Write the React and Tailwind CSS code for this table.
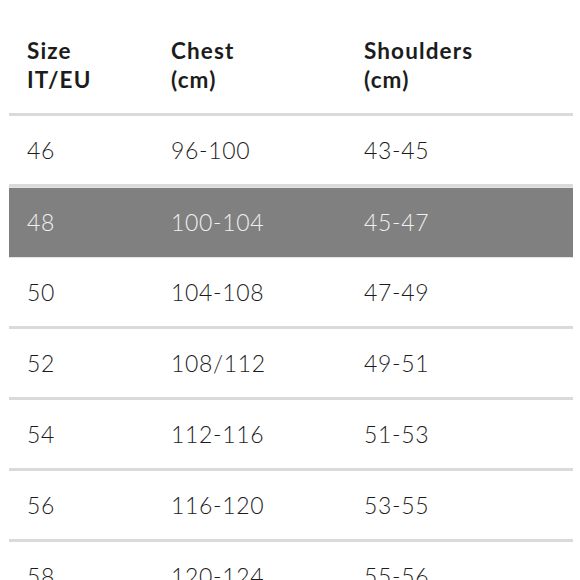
const rows = [
  ["46", "96-100", "43-45"],
  ["48", "100-104", "45-47"],
  ["50", "104-108", "47-49"],
  ["52", "108/112", "49-51"],
  ["54", "112-116", "51-53"],
  ["56", "116-120", "53-55"],
  ["58", "120-124", "55-56"],
];

export default function App() {
  return (
    <div
      className="h-[580px] w-[580px] overflow-hidden bg-white pl-[9px] pr-[7px] text-[#1c1c1c]"
      style={{ fontFamily: "Lato, 'Open Sans', sans-serif" }}
    >
      <div className="flex h-[116px] border-b-[3px] border-[#dadada] pt-[36px] text-[22.5px] font-bold leading-[29px] tracking-[0.05em]">
        <div className="w-[144px] pl-[18px]">
          Size
          <br />
          IT/EU
        </div>
        <div className="w-[193px] pl-[18px]">
          Chest
          <br />
          (cm)
        </div>
        <div className="flex-1 pl-[18px]">
          Shoulders
          <br />
          (cm)
        </div>
      </div>
      {rows.map((r) => {
        const active = r[0] === "48";
        return (
          <div
            key={r[0]}
            className={
              active
                ? "flex h-[71px] items-center border-y border-[#e4e4e4] bg-[#808080] text-[23px] font-light tracking-[0.03em] text-[#f0f0f0]"
                : "flex h-[71px] items-center border-b-[3px] border-[#dadada] text-[23px] font-light tracking-[0.03em]"
            }
          >
            <div className="w-[144px] pl-[18px]">{r[0]}</div>
            <div className="w-[193px] pl-[18px]">{r[1]}</div>
            <div className="flex-1 pl-[18px]">{r[2]}</div>
          </div>
        );
      })}
    </div>
  );
}
